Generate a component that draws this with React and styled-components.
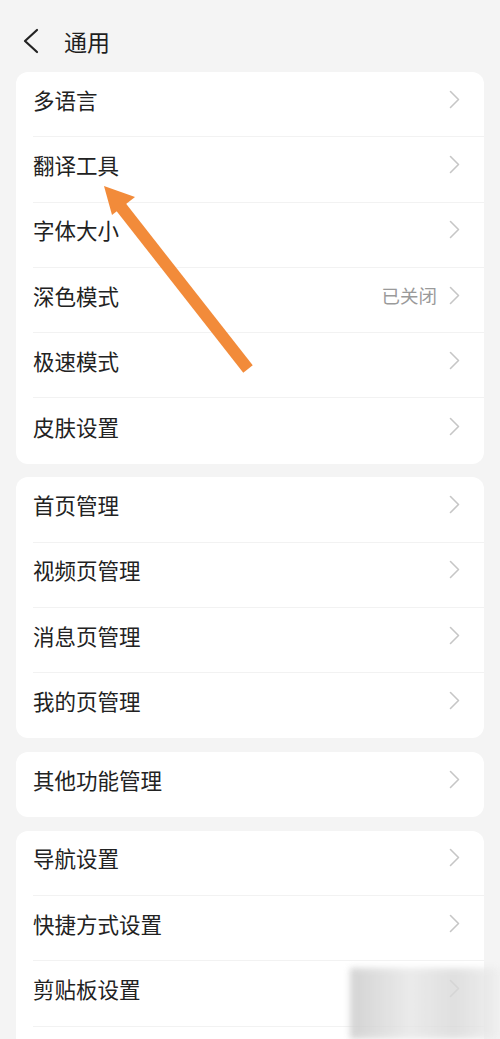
import styled, { createGlobalStyle } from "styled-components";

const GlobalStyle = createGlobalStyle`
  html, body {
    margin: 0;
    padding: 0;
    background: #f4f4f4;
  }
  body {
    font-family: "Noto Sans CJK SC", "Noto Sans", sans-serif;
  }
`;

// 设置分组 (最后一组在屏幕底部被截断)
const groups = [
  {
    items: [
      { label: "多语言" },
      { label: "翻译工具" },
      { label: "字体大小" },
      { label: "深色模式", value: "已关闭" },
      { label: "极速模式" },
      { label: "皮肤设置" },
    ],
  },
  {
    items: [
      { label: "首页管理" },
      { label: "视频页管理" },
      { label: "消息页管理" },
      { label: "我的页管理" },
    ],
  },
  { items: [{ label: "其他功能管理" }] },
  {
    continues: true,
    items: [
      { label: "导航设置" },
      { label: "快捷方式设置" },
      { label: "剪贴板设置" },
    ],
  },
];

const Chevron = () => (
  <svg width="11" height="19" viewBox="0 0 11 19" fill="none">
    <path d="M1.5 1.5 L9.5 9.5 L1.5 17.5" stroke="#c6c6c6" strokeWidth="1.6" strokeLinecap="round" strokeLinejoin="round" />
  </svg>
);

const BackIcon = () => (
  <svg width="18" height="26" viewBox="0 0 18 26" fill="none">
    <path d="M15 2 L3 13 L15 24" stroke="#222" strokeWidth="2.2" strokeLinecap="round" strokeLinejoin="round" />
  </svg>
);

const App = () => {
  return (
    <Page>
      <GlobalStyle />
      <Header>
        <BackBtn>
          <BackIcon />
        </BackBtn>
        <Title>通用</Title>
      </Header>

      <List>
        {groups.map((group, gi) => (
          <Card key={gi} $continues={group.continues}>
            {group.items.map((item) => (
              <Row key={item.label}>
                <Label>{item.label}</Label>
                <Right>
                  {item.value && <Value>{item.value}</Value>}
                  <Chevron />
                </Right>
              </Row>
            ))}
          </Card>
        ))}
      </List>

      {/* 标注箭头 */}
      <Overlay width="500" height="1039" viewBox="0 0 500 1039">
        <line x1="248" y1="369" x2="121" y2="207" stroke="#f28b3a" strokeWidth="12" />
        <polygon points="104,186 135,197 112,215" fill="#f28b3a" />
      </Overlay>

      <Watermark />
    </Page>
  );
};

export default App;

const Page = styled.div`
  position: relative;
  width: 500px;
  height: 1039px;
  overflow: hidden;
  background: #f4f4f4;
`;

const Header = styled.div`
  display: flex;
  align-items: center;
  height: 72px;
  padding: 9px 0 0 22px;
  box-sizing: border-box;
`;

const BackBtn = styled.div`
  display: flex;
  align-items: center;
  width: 42px;
`;

const Title = styled.div`
  font-size: 23px;
  color: #1f1f1f;
`;

const List = styled.div`
  display: flex;
  flex-direction: column;
  gap: 13.5px;
  padding: 0 16px;
`;

const Card = styled.div`
  background: #fff;
  border-radius: 12px;
  padding-left: 17px;
  padding-bottom: ${(p) => (p.$continues ? "60px" : "0")};

  & > div:last-child {
    border-bottom: ${(p) => (p.$continues ? "1px solid #f2f2f2" : "none")};
  }
`;

const Row = styled.div`
  display: flex;
  align-items: center;
  justify-content: space-between;
  height: 65.3px;
  padding-right: 24px;
  padding-bottom: 10px;
  box-sizing: border-box;
  border-bottom: 1px solid #f2f2f2;
`;

const Label = styled.div`
  font-size: 21.5px;
  color: #222;
`;

const Right = styled.div`
  display: flex;
  align-items: center;
  gap: 12px;
`;

const Value = styled.span`
  font-size: 18.5px;
  color: #9a9a9a;
`;

const Overlay = styled.svg`
  position: absolute;
  left: 0;
  top: 0;
  pointer-events: none;
`;

const Watermark = styled.div`
  position: absolute;
  left: 350px;
  top: 968px;
  width: 150px;
  height: 71px;
  background: linear-gradient(90deg, #c9c9c9 0%, #e6e6e6 40%, #d8d8d8 70%, #eeeeee 100%);
  filter: blur(3px);
  opacity: 0.8;
`;
